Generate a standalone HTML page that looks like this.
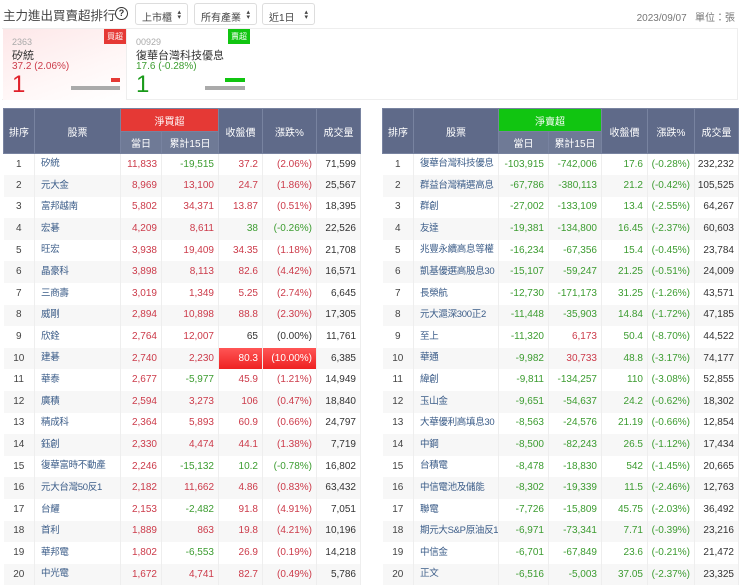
<!DOCTYPE html>
<html><head><meta charset="utf-8"><style>
*{margin:0;padding:0;box-sizing:border-box}
body{width:740px;height:587px;overflow:hidden;background:#fff;font-family:"Liberation Sans","Noto Sans CJK TC",sans-serif;position:relative;color:#333}
.title{position:absolute;left:3px;top:5px;font-size:12.5px;color:#444}
.q{position:absolute;left:115px;top:7px;width:13px;height:13px;border:1.5px solid #333;border-radius:50%;font-size:9px;text-align:center;line-height:10px;font-weight:bold}
.sel{position:absolute;top:3px;height:22px;border:1px solid #ddd;border-radius:3px;font-size:10px;color:#444;padding:5px 6px}
.sel i{position:absolute;right:6px;top:6px;font-style:normal;font-size:7px;line-height:5px;color:#444}
.date{position:absolute;right:5px;top:9px;font-size:10px;color:#777}
.cards{position:absolute;left:2px;top:28px;width:736px;height:72px;border:1px solid #eee;border-left:none}
.card{position:absolute;top:0;height:71px;font-size:10px}
.c1{left:1px;width:123px;background:linear-gradient(160deg,#fde7e8,#fff7f7 60%,#fff)}
.c2{left:124px;width:124px;border-left:1px solid #eee}
.card .code{position:absolute;left:9px;top:8px;color:#aaa;font-size:9px}
.card .nm{position:absolute;left:9px;top:18px;font-size:11px;color:#333}
.card .pr{position:absolute;left:9px;top:32px;font-size:10px}
.card .big{position:absolute;left:9px;top:44px;font-size:24px;line-height:24px}
.tag{position:absolute;top:0;right:0;color:#fff;font-size:8px;padding:2px 3px}
.bar{position:absolute;height:4px}
table{position:absolute;top:108px;border-collapse:collapse;table-layout:fixed;font-size:10px}
th{background:#5f6a89;color:#fff;font-weight:normal;border:1px solid #7883a0;font-size:10px}
th.s{background:#6f7a96;height:22px}
th.rh{background:#e53935;height:23px}
th.gh{background:#11c511;height:23px}
td{height:21.6px;line-height:12px;vertical-align:middle;border-right:1px solid #eee;text-align:right;padding-right:4px;white-space:nowrap;overflow:hidden}
td:first-child{text-align:center;padding:0;color:#444}
td:nth-child(2){text-align:left;padding-left:6px;color:#3b5c88;font-size:9.5px;letter-spacing:-0.3px}
td:nth-child(2) span{display:inline-block;vertical-align:middle;line-height:12px}
td:last-child{color:#333}
tr:nth-child(even) td{background:#f7f7f7}
.r{color:#cc3b4a}.g{color:#3c9c30}.k{color:#333}
td.hl{background:linear-gradient(#f55,#e22)!important;color:#fff}
</style></head><body>
<div class="title">主力進出買賣超排行</div><div class="q">?</div>
<div class="sel" style="left:135px;width:53px">上市櫃<i>▴<br>▾</i></div>
<div class="sel" style="left:194px;width:63px">所有產業<i>▴<br>▾</i></div>
<div class="sel" style="left:262px;width:53px">近1日<i>▴<br>▾</i></div>
<div class="date">2023/09/07 &nbsp; 單位：張</div>
<div class="cards">
<div class="card c1"><div class="tag" style="background:#e53935">買超</div><div class="code">2363</div><div class="nm">矽統</div><div class="pr r">37.2 (2.06%)</div><div class="big" style="color:#e0202a">1</div>
<div class="bar" style="left:68px;top:57px;width:49px;background:#aaa"></div><div class="bar" style="left:108px;top:49px;width:9px;background:#e53935"></div></div>
<div class="card c2"><div class="tag" style="background:#11c511">賣超</div><div class="code">00929</div><div class="nm">復華台灣科技優息</div><div class="pr g">17.6 (-0.28%)</div><div class="big" style="color:#1a9a1a">1</div>
<div class="bar" style="left:78px;top:57px;width:40px;background:#aaa"></div><div class="bar" style="left:98px;top:49px;width:20px;background:#11c511"></div></div>
</div>

<table style="left:3px;width:357px">
<colgroup><col style="width:31px"><col style="width:86px"><col style="width:41px"><col style="width:57px"><col style="width:44px"><col style="width:54px"><col style="width:44px"></colgroup>
<tr><th rowspan="2">排序</th><th rowspan="2">股票</th><th colspan="2" class="rh">淨買超</th><th rowspan="2">收盤價</th><th rowspan="2">漲跌%</th><th rowspan="2">成交量</th></tr>
<tr><th class="s">當日</th><th class="s">累計15日</th></tr>
<tr><td>1</td><td><span>矽統</span></td><td class="r">11,833</td><td class="g">-19,515</td><td class="r">37.2</td><td class="r">(2.06%)</td><td>71,599</td></tr>
<tr><td>2</td><td><span>元大金</span></td><td class="r">8,969</td><td class="r">13,100</td><td class="r">24.7</td><td class="r">(1.86%)</td><td>25,567</td></tr>
<tr><td>3</td><td><span>富邦越南</span></td><td class="r">5,802</td><td class="r">34,371</td><td class="r">13.87</td><td class="r">(0.51%)</td><td>18,395</td></tr>
<tr><td>4</td><td><span>宏碁</span></td><td class="r">4,209</td><td class="r">8,611</td><td class="g">38</td><td class="g">(-0.26%)</td><td>22,526</td></tr>
<tr><td>5</td><td><span>旺宏</span></td><td class="r">3,938</td><td class="r">19,409</td><td class="r">34.35</td><td class="r">(1.18%)</td><td>21,708</td></tr>
<tr><td>6</td><td><span>晶豪科</span></td><td class="r">3,898</td><td class="r">8,113</td><td class="r">82.6</td><td class="r">(4.42%)</td><td>16,571</td></tr>
<tr><td>7</td><td><span>三商壽</span></td><td class="r">3,019</td><td class="r">1,349</td><td class="r">5.25</td><td class="r">(2.74%)</td><td>6,645</td></tr>
<tr><td>8</td><td><span>威剛</span></td><td class="r">2,894</td><td class="r">10,898</td><td class="r">88.8</td><td class="r">(2.30%)</td><td>17,305</td></tr>
<tr><td>9</td><td><span>欣銓</span></td><td class="r">2,764</td><td class="r">12,007</td><td class="k">65</td><td class="k">(0.00%)</td><td>11,761</td></tr>
<tr><td>10</td><td><span>建碁</span></td><td class="r">2,740</td><td class="r">2,230</td><td class="hl">80.3</td><td class="hl">(10.00%)</td><td>6,385</td></tr>
<tr><td>11</td><td><span>華泰</span></td><td class="r">2,677</td><td class="g">-5,977</td><td class="r">45.9</td><td class="r">(1.21%)</td><td>14,949</td></tr>
<tr><td>12</td><td><span>廣積</span></td><td class="r">2,594</td><td class="r">3,273</td><td class="r">106</td><td class="r">(0.47%)</td><td>18,840</td></tr>
<tr><td>13</td><td><span>精成科</span></td><td class="r">2,364</td><td class="r">5,893</td><td class="r">60.9</td><td class="r">(0.66%)</td><td>24,797</td></tr>
<tr><td>14</td><td><span>鈺創</span></td><td class="r">2,330</td><td class="r">4,474</td><td class="r">44.1</td><td class="r">(1.38%)</td><td>7,719</td></tr>
<tr><td>15</td><td><span>復華富時不動產</span></td><td class="r">2,246</td><td class="g">-15,132</td><td class="g">10.2</td><td class="g">(-0.78%)</td><td>16,802</td></tr>
<tr><td>16</td><td><span>元大台灣50反1</span></td><td class="r">2,182</td><td class="r">11,662</td><td class="r">4.86</td><td class="r">(0.83%)</td><td>63,432</td></tr>
<tr><td>17</td><td><span>台耀</span></td><td class="r">2,153</td><td class="g">-2,482</td><td class="r">91.8</td><td class="r">(4.91%)</td><td>7,051</td></tr>
<tr><td>18</td><td><span>首利</span></td><td class="r">1,889</td><td class="r">863</td><td class="r">19.8</td><td class="r">(4.21%)</td><td>10,196</td></tr>
<tr><td>19</td><td><span>華邦電</span></td><td class="r">1,802</td><td class="g">-6,553</td><td class="r">26.9</td><td class="r">(0.19%)</td><td>14,218</td></tr>
<tr><td>20</td><td><span>中光電</span></td><td class="r">1,672</td><td class="r">4,741</td><td class="r">82.7</td><td class="r">(0.49%)</td><td>5,786</td></tr>
</table>

<table style="left:382px;width:356px">
<colgroup><col style="width:31px"><col style="width:85px"><col style="width:50px"><col style="width:53px"><col style="width:46px"><col style="width:47px"><col style="width:44px"></colgroup>
<tr><th rowspan="2">排序</th><th rowspan="2">股票</th><th colspan="2" class="gh">淨賣超</th><th rowspan="2">收盤價</th><th rowspan="2">漲跌%</th><th rowspan="2">成交量</th></tr>
<tr><th class="s">當日</th><th class="s">累計15日</th></tr>
<tr><td>1</td><td><span>復華台灣科技優息</span></td><td class="g">-103,915</td><td class="g">-742,006</td><td class="g">17.6</td><td class="g">(-0.28%)</td><td>232,232</td></tr>
<tr><td>2</td><td><span>群益台灣精選高息</span></td><td class="g">-67,786</td><td class="g">-380,113</td><td class="g">21.2</td><td class="g">(-0.42%)</td><td>105,525</td></tr>
<tr><td>3</td><td><span>群創</span></td><td class="g">-27,002</td><td class="g">-133,109</td><td class="g">13.4</td><td class="g">(-2.55%)</td><td>64,267</td></tr>
<tr><td>4</td><td><span>友達</span></td><td class="g">-19,381</td><td class="g">-134,800</td><td class="g">16.45</td><td class="g">(-2.37%)</td><td>60,603</td></tr>
<tr><td>5</td><td><span>兆豐永續高息等權</span></td><td class="g">-16,234</td><td class="g">-67,356</td><td class="g">15.4</td><td class="g">(-0.45%)</td><td>23,784</td></tr>
<tr><td>6</td><td><span>凱基優選高股息30</span></td><td class="g">-15,107</td><td class="g">-59,247</td><td class="g">21.25</td><td class="g">(-0.51%)</td><td>24,009</td></tr>
<tr><td>7</td><td><span>長榮航</span></td><td class="g">-12,730</td><td class="g">-171,173</td><td class="g">31.25</td><td class="g">(-1.26%)</td><td>43,571</td></tr>
<tr><td>8</td><td><span>元大滬深300正2</span></td><td class="g">-11,448</td><td class="g">-35,903</td><td class="g">14.84</td><td class="g">(-1.72%)</td><td>47,185</td></tr>
<tr><td>9</td><td><span>至上</span></td><td class="g">-11,320</td><td class="r">6,173</td><td class="g">50.4</td><td class="g">(-8.70%)</td><td>44,522</td></tr>
<tr><td>10</td><td><span>華通</span></td><td class="g">-9,982</td><td class="r">30,733</td><td class="g">48.8</td><td class="g">(-3.17%)</td><td>74,177</td></tr>
<tr><td>11</td><td><span>緯創</span></td><td class="g">-9,811</td><td class="g">-134,257</td><td class="g">110</td><td class="g">(-3.08%)</td><td>52,855</td></tr>
<tr><td>12</td><td><span>玉山金</span></td><td class="g">-9,651</td><td class="g">-54,637</td><td class="g">24.2</td><td class="g">(-0.62%)</td><td>18,302</td></tr>
<tr><td>13</td><td><span>大華優利高填息30</span></td><td class="g">-8,563</td><td class="g">-24,576</td><td class="g">21.19</td><td class="g">(-0.66%)</td><td>12,854</td></tr>
<tr><td>14</td><td><span>中鋼</span></td><td class="g">-8,500</td><td class="g">-82,243</td><td class="g">26.5</td><td class="g">(-1.12%)</td><td>17,434</td></tr>
<tr><td>15</td><td><span>台積電</span></td><td class="g">-8,478</td><td class="g">-18,830</td><td class="g">542</td><td class="g">(-1.45%)</td><td>20,665</td></tr>
<tr><td>16</td><td><span>中信電池及儲能</span></td><td class="g">-8,302</td><td class="g">-19,339</td><td class="g">11.5</td><td class="g">(-2.46%)</td><td>12,763</td></tr>
<tr><td>17</td><td><span>聯電</span></td><td class="g">-7,726</td><td class="g">-15,809</td><td class="g">45.75</td><td class="g">(-2.03%)</td><td>36,492</td></tr>
<tr><td>18</td><td><span>期元大S&amp;P原油反1</span></td><td class="g">-6,971</td><td class="g">-73,341</td><td class="g">7.71</td><td class="g">(-0.39%)</td><td>23,216</td></tr>
<tr><td>19</td><td><span>中信金</span></td><td class="g">-6,701</td><td class="g">-67,849</td><td class="g">23.6</td><td class="g">(-0.21%)</td><td>21,472</td></tr>
<tr><td>20</td><td><span>正文</span></td><td class="g">-6,516</td><td class="g">-5,003</td><td class="g">37.05</td><td class="g">(-2.37%)</td><td>23,325</td></tr>
</table>
</body></html>
